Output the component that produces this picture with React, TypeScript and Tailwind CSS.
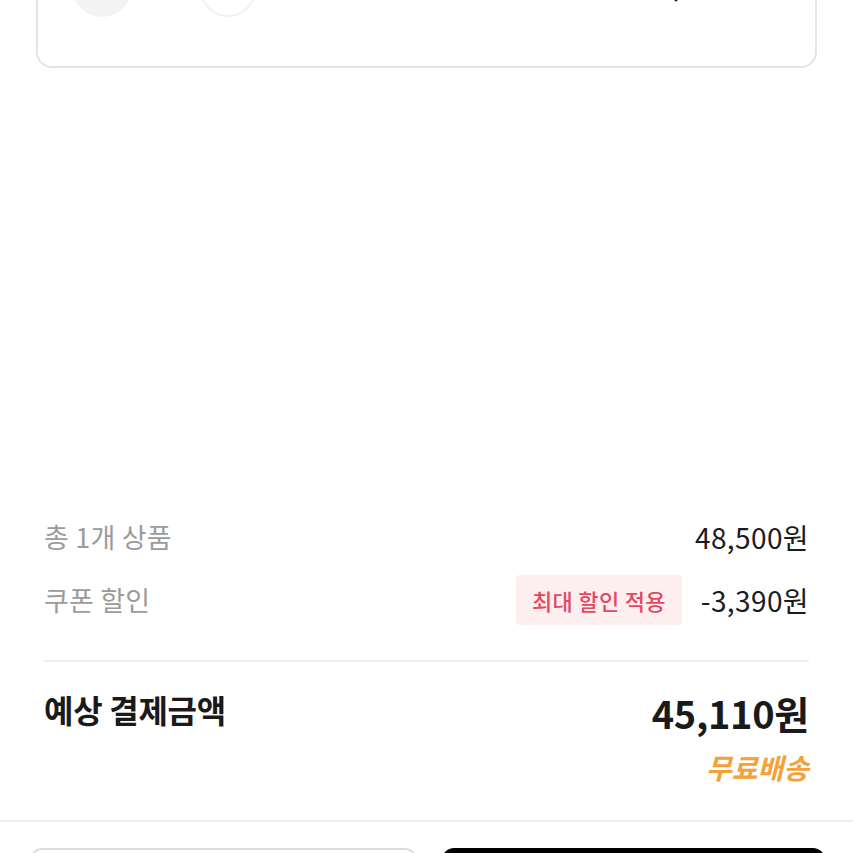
import React from "react";

const font = { fontFamily: '"Noto Sans CJK KR", "Noto Sans", sans-serif' };

const Row = ({ label, children }: { label: string; children: React.ReactNode }) => (
	<div className="flex h-[50px] items-center justify-between">
		<span className="text-[27px] tracking-[0.2px] text-[#9b9b9b]">{label}</span>
		<div className="flex items-center gap-[19px]">{children}</div>
	</div>
);

export default function App() {
	return (
		<div className="flex h-[853px] w-full flex-col overflow-hidden bg-white" style={font}>
			{/* product card, scrolled mostly out of view */}
			<div className="h-[68px] shrink-0 overflow-hidden">
				<div className="mx-[36px] mt-[-100px] h-[168px] rounded-b-[16px] border-2 border-t-0 border-[#e4e4e4]">
					<div className="flex items-start pt-[57px] pl-[34px]">
						<div className="h-[60px] w-[60px] rounded-full bg-[#f3f3f3]" />
						<div className="ml-[68px] h-[60px] w-[56px] rounded-full border-2 border-[#f1f1f1] bg-white" />
						<span className="ml-auto mr-[56px] mt-[11px] text-[30px] leading-[30px] text-[#111]">48,500원</span>
					</div>
				</div>
			</div>

			<div className="mt-[444px] px-[44px]">
				<Row label="총 1개 상품">
					<span className="text-[28px] tracking-[0.4px] text-[#1c1c1c]">48,500원</span>
				</Row>
				<div className="mt-[13px]">
					<Row label="쿠폰 할인">
						<span className="flex h-[50px] items-center rounded-[4px] bg-[#fdeef0] px-[16px] text-[22px] font-medium tracking-[0.3px] text-[#e4485f]">
							최대 할인 적용
						</span>
						<span className="text-[28px] tracking-[0.4px] text-[#1c1c1c]">-3,390원</span>
					</Row>
				</div>
				<div className="mt-[35px] h-[2px] bg-[#eeeeee]" />
				<div className="mt-[25px] flex items-start justify-between">
					<span className="text-[32px] font-bold leading-[44px] tracking-[-0.3px] text-[#1a1a1a]">예상 결제금액</span>
					<div className="flex flex-col items-end">
						<span className="text-[38px] font-bold leading-[52px] tracking-[-0.3px] text-[#1a1a1a]">45,110원</span>
						<span className="mt-[12px] text-[28px] font-bold italic leading-[32px] text-[#f3a23a]">무료배송</span>
					</div>
				</div>
			</div>

			<div className="mt-[37px] h-[2px] shrink-0 bg-[#eeeeee]" />
			<div className="flex gap-[25px] pl-[30px] pr-[28px] pt-[26px]">
				<div className="h-[60px] flex-1 rounded-[12px] border-2 border-[#dddddd] bg-white" />
				<div className="h-[60px] flex-1 rounded-[12px] bg-black" />
			</div>
		</div>
	);
}
